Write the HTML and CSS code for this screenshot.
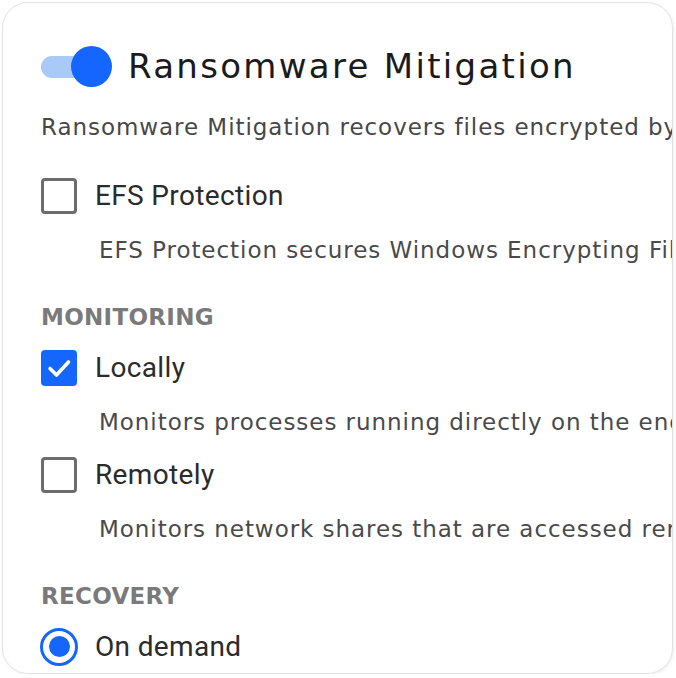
FILE: index.html
```html
<!DOCTYPE html>
<html>
<head>
<meta charset="utf-8">
<link rel="stylesheet" href="styles.css">
</head>
<body>
<div class="card">
  <div class="header">
    <div class="toggle"><span class="track"></span><span class="knob"></span></div>
    <h1 class="title">Ransomware Mitigation</h1>
  </div>
  <p class="desc">Ransomware Mitigation recovers files encrypted by ransomware attacks</p>

  <div class="option first">
    <span class="box"></span>
    <span class="label">EFS Protection</span>
  </div>
  <p class="subdesc">EFS Protection secures Windows Encrypting File System</p>

  <div class="section">MONITORING</div>
  <div class="option">
    <span class="box checked">
      <svg viewBox="0 0 36 36" width="36" height="36"><path d="M9 18.5 L15.5 25 L27.5 12" fill="none" stroke="#fff" stroke-width="3.6" stroke-linecap="round" stroke-linejoin="round"/></svg>
    </span>
    <span class="label">Locally</span>
  </div>
  <p class="subdesc">Monitors processes running directly on the endpoint</p>
  <div class="option">
    <span class="box"></span>
    <span class="label">Remotely</span>
  </div>
  <p class="subdesc">Monitors network shares that are accessed remotely</p>

  <div class="section">RECOVERY</div>
  <div class="option">
    <span class="radio"><span class="dot"></span></span>
    <span class="label">On demand</span>
  </div>
</div>
</body>
</html>
```
FILE: styles.css
```css
html, body {
  margin: 0;
  padding: 0;
  background: #ffffff;
}
.card {
  box-sizing: border-box;
  margin: 2px 0 0 2px;
  width: 671px;
  height: 672px;
  border: 1.5px solid #e2e2e2;
  border-radius: 26px;
  box-shadow: 1px 1px 3px rgba(0,0,0,0.07);
  overflow: hidden;
  padding: 43px 0 0 38px;
  white-space: nowrap;
  font-family: "DejaVu Sans", sans-serif;
}
.header {
  display: flex;
  align-items: center;
  gap: 16px;
  height: 41px;
}
.toggle {
  position: relative;
  width: 71px;
  height: 41px;
  flex: none;
}
.track {
  position: absolute;
  left: 0;
  top: 10px;
  width: 60px;
  height: 22px;
  border-radius: 11px;
  background: #a9c9f7;
}
.knob {
  position: absolute;
  right: 0;
  top: 0;
  width: 41px;
  height: 41px;
  border-radius: 50%;
  background: #1565ff;
}
.title {
  margin: 0;
  font-weight: 400;
  font-size: 34px;
  line-height: 41px;
  color: #1b1b1b;
  letter-spacing: 2.3px;
}
.desc {
  margin: 24.5px 0 0 0;
  font-size: 23px;
  line-height: 30px;
  color: #474747;
  letter-spacing: 0.95px;
}
.option {
  display: flex;
  align-items: center;
  gap: 18px;
  height: 36px;
  margin-top: 20px;
}
.option.first { margin-top: 36px; }
.box {
  box-sizing: border-box;
  width: 36px;
  height: 36px;
  border: 3px solid #6c6c6c;
  border-radius: 4px;
  flex: none;
}
.box.checked {
  border: none;
  background: #1565ff;
}
.box svg { display: block; }
.label {
  font-family: Roboto, "Liberation Sans", sans-serif;
  font-size: 28px;
  line-height: 36px;
  color: #2b2b2b;
  letter-spacing: 0.35px;
}
.subdesc {
  margin: 21px 0 0 58px;
  font-size: 23px;
  line-height: 30px;
  color: #4a4a4a;
  letter-spacing: 0.95px;
}
.section {
  margin-top: 37px;
  margin-bottom: -2px;
  font-weight: 700;
  font-size: 23px;
  line-height: 30px;
  color: #7a7a7a;
  letter-spacing: 0.3px;
}
.radio {
  box-sizing: border-box;
  width: 38px;
  height: 38px;
  border: 3.5px solid #1565ff;
  border-radius: 50%;
  display: flex;
  align-items: center;
  justify-content: center;
  flex: none;
  margin-left: -1px;
  margin-right: -1px;
}
.dot {
  width: 21px;
  height: 21px;
  border-radius: 50%;
  background: #1565ff;
}
```
